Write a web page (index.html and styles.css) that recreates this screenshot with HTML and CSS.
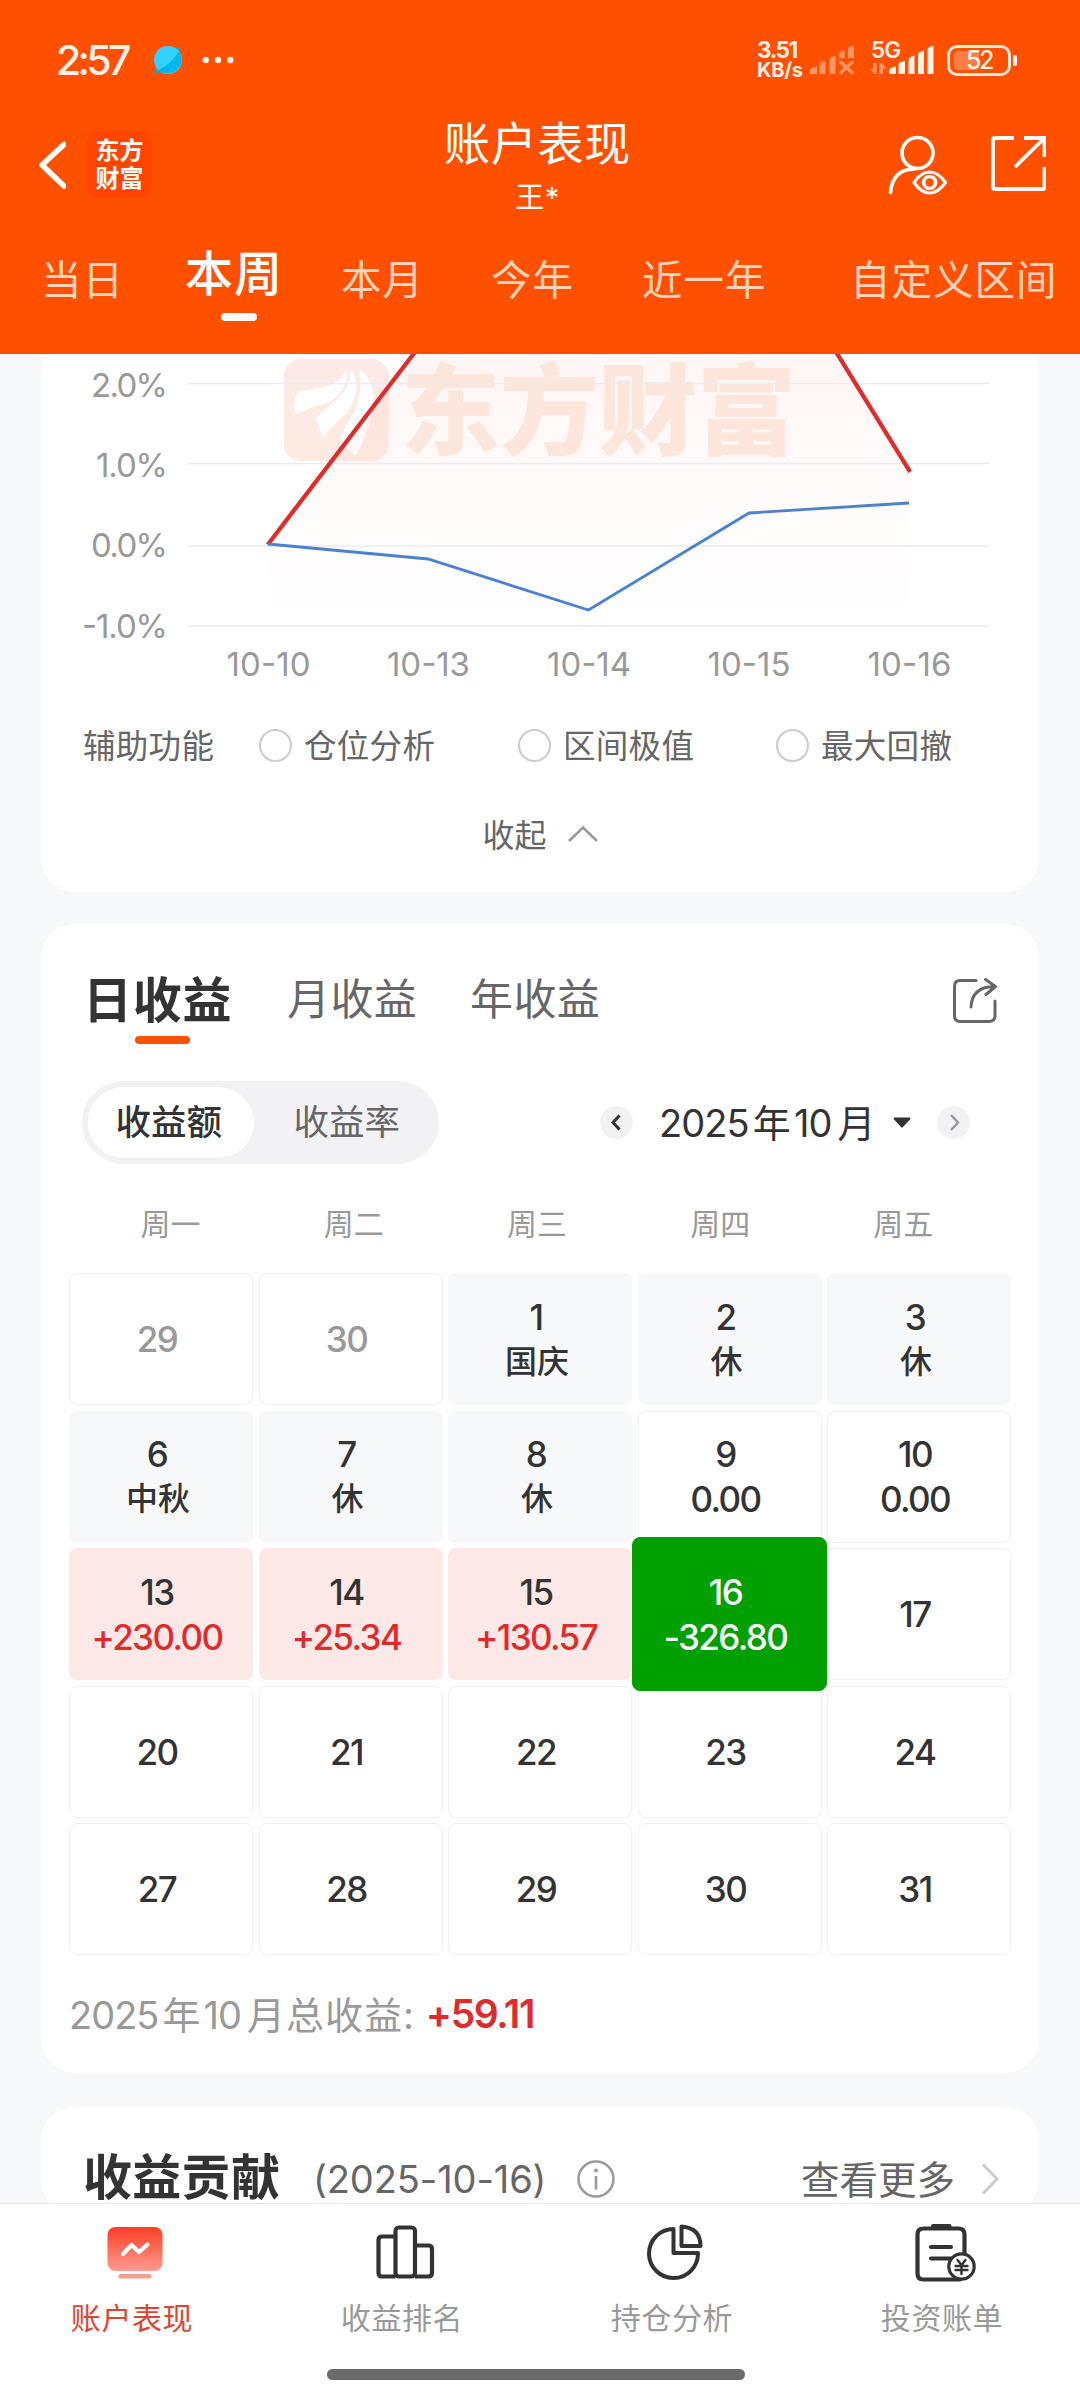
FILE: index.html
```html
<!DOCTYPE html>
<html lang="zh-CN">
<head>
<meta charset="utf-8">
<title>账户表现</title>
<link rel="stylesheet" href="styles.css">
</head>
<body>
<div class="app">
  <header class="header">
    <div class="status">
      <span class="clock">2:57</span>
      <svg class="status-left" width="90" height="34" viewBox="150 43 90 34">
        <path d="M154 74l2-7 5 5zM180 47l-2 7-5-5z" fill="#2a9fc0"/>
        <circle cx="168" cy="60" r="14" fill="#33d1ff"/>
        <path d="M179 51.500A14 14 0 0 1 158.500 70.200Q171 64 179 51.500z" fill="#00b8ee"/>
        <g fill="#fff0e8"><circle cx="205.700" cy="60" r="3.200"/><circle cx="218" cy="60" r="3.200"/><circle cx="230.300" cy="60" r="3.200"/></g>
      </svg>
      <div class="speed"><span class="speed-num">3.51</span><span class="speed-unit">KB/s</span></div>
      <svg class="signal" width="46" height="30" viewBox="810 46 46 30" fill="#ff9664">
        <path d="M810 75v-3q0-2 2-3l5-2v8zM819.500 75v-9q0-2 2-3l4-1v13zM829.500 75v-14q0-2 2-3l4-1v18zM839 59v-3.500q0-2 2-3l3.500-1V59zM848 59v-8.500q0-2 2-3l4-1.500v13z"/>
        <path d="M841 63.500l11 10M852 63.500l-11 10" stroke="#ff9664" stroke-width="3.500" stroke-linecap="round"/>
      </svg>
      <div class="net">
        <span class="net-type">5G</span>
        <svg width="64" height="30" viewBox="870 46 64 30">
          <path d="M870 70h3.500v-6h3v11h-2zM879.500 64h2l5 5.500h-3.500v5.500h-3.500z" fill="#ff9664"/>
          <path fill="#fff0e8" d="M889 75v-3q0-2 2-3l5-2v8zM898.500 75v-9q0-2 2-3l4.500-1v13zM908.500 75v-14q0-2 2-3l4-1.500v18.500zM918 75v-19q0-2 2-3l4-1.500v23.500zM927.500 75v-24q0-2 2-3l4-1.500v28.500z"/>
        </svg>
      </div>
      <div class="battery"><span class="battery-fill"></span><span class="battery-num">52</span></div>
      <span class="battery-tip"></span>
    </div>

    <div class="titlebar">
      <div class="title-left">
        <svg width="28" height="50" viewBox="38 140 28 50"><path d="M64 144.500L42 165l22 21" fill="none" stroke="#fff" stroke-width="5.500" stroke-linecap="round" stroke-linejoin="round"/></svg>
        <div class="brand"><span>东方</span><span>财富</span></div>
      </div>
      <div class="title-mid">
        <h1 class="title">账户表现</h1>
        <div class="subtitle">王*</div>
      </div>
      <div class="title-right">
        <svg width="62" height="62" viewBox="887 134 62 62" fill="none" stroke="#fff" stroke-width="3.700" stroke-linecap="round">
          <circle cx="917.500" cy="152" r="15.500"/>
          <path d="M890.500 191.500q2-23 23.500-23.500"/>
          <path d="M914 181.500Q921 171 929.600 171T945.500 181.500Q938 192 929.600 192T914 181.500z" fill="#ff5000" stroke-linejoin="round" stroke-width="3.200"/>
          <circle cx="929.600" cy="181.500" r="6" stroke-width="3.600"/>
        </svg>
        <svg width="56" height="56" viewBox="990 136 56 56" fill="none" stroke="#fff" stroke-width="3.800">
          <path d="M1014 139H995q-2 0-2 2v47q0 2 2 2h48q1.500 0 1.500-2V168M1024 139h20.500v19M1044 139.500L1015 168"/>
        </svg>
      </div>
    </div>

    <nav class="tabs">
      <span class="tab">当日</span>
      <span class="tab tab-active">本周</span>
      <span class="tab">本月</span>
      <span class="tab">今年</span>
      <span class="tab">近一年</span>
      <span class="tab">自定义区间</span>
    </nav>
  </header>

  <main class="content">
    <section class="card chart-card">
      <svg class="chart" width="998" height="336" viewBox="41 354 998 336">
        <defs>
          <linearGradient id="area" x1="0" y1="210" x2="0" y2="626" gradientUnits="userSpaceOnUse">
            <stop offset="0" stop-color="#f33a2a" stop-opacity=".08"/>
            <stop offset="1" stop-color="#f36a5a" stop-opacity="0"/>
          </linearGradient>
          <linearGradient id="mark" x1="0" y1="0" x2="0" y2="1">
            <stop offset="0" stop-color="#fde9e6"/><stop offset="1" stop-color="#fdebe2"/>
          </linearGradient>
        </defs>
        <rect x="284" y="359" width="105" height="102" rx="17" fill="url(#mark)"/>
        <g fill="#fff">
          <path d="M294 405q1-13 6-14c22-3 40-6 47-22q1 24-20 34-18 5-31 11-2-3-2-9z"/>
          <path d="M316 418c10-12 35-22 35-50q10 18 2 33c-6 17-20 21-29 37q-5-8-8-20z"/>
          <path d="M341 438c5-18 25-30 18-70q19 15 13 43-4 25-17 45-5-7-14-11z"/>
        </g>
        <path d="M268 544L428 335L749 211L909 471V626H268z" fill="url(#area)"/>
        <text class="watermark" x="401" y="447" textLength="395" lengthAdjust="spacing">东方财富</text>
        <path d="M188 383.500H990M188 463.500H990M188 546H990M188 626H990" stroke="#e9ecf0" stroke-width="1.500"/>
        <path d="M269 543L428 335L749 211L909 470" fill="none" stroke="#dc2f2d" stroke-width="4.300" stroke-linecap="square"/>
        <path d="M268 544L428 559L588.500 610L749 513L909 503" fill="none" stroke="#4b80d2" stroke-width="2.800"/>
        <g class="axis" text-anchor="end">
          <text x="168" y="396.500" textLength="77">2.0%</text><text x="168" y="476.500" textLength="72">1.0%</text><text x="168" y="556.500" textLength="77">0.0%</text><text x="168" y="638" textLength="86">-1.0%</text>
        </g>
        <g class="axis" text-anchor="middle">
          <text x="268.500" y="675.500" textLength="84">10-10</text><text x="428.500" y="675.500" textLength="83">10-13</text><text x="589" y="675.500" textLength="84">10-14</text><text x="749" y="675.500" textLength="83">10-15</text><text x="909.500" y="675.500" textLength="84">10-16</text>
        </g>
      </svg>
      <div class="options">
        <span class="options-title label">辅助功能</span>
        <span class="option"><i class="radio"></i><span class="label">仓位分析</span></span>
        <span class="option"><i class="radio"></i><span class="label">区间极值</span></span>
        <span class="option"><i class="radio"></i><span class="label">最大回撤</span></span>
      </div>
      <div class="collapse"><span class="label">收起</span>
        <svg width="32" height="18" viewBox="0 0 32 18"><path d="M2 16L16 2.500 30 16" fill="none" stroke="#999" stroke-width="2.600"/></svg>
      </div>
    </section>

    <section class="card income">
      <div class="income-tabs">
        <span class="itab itab-active">日收益</span>
        <span class="itab">月收益</span>
        <span class="itab">年收益</span>
        <svg class="share" width="46" height="46" viewBox="952 977 46 46" fill="none" stroke="#666" stroke-width="3" stroke-linejoin="round" stroke-linecap="round">
          <path d="M976 979.500H960q-5.500 0-5.500 6v29q0 6 5.500 6h29q6 0 6-6V1000"/>
          <path d="M971 1006q1-20 23-20.500M985.500 978.500l10 7-9.500 8"/>
        </svg>
      </div>
      <div class="controls">
        <div class="toggle"><span class="toggle-on">收益额</span><span class="toggle-off">收益率</span></div>
        <div class="month">
          <svg width="33" height="33"><circle cx="16.500" cy="16.500" r="16.500" fill="#f2f2f4"/><path d="M19.500 9.500l-6.500 7 6.500 7" fill="none" stroke="#333" stroke-width="3"/></svg>
          <span class="month-text">2025<i class="thin"></i>年<i class="thin"></i>10<i class="thin thin-wide"></i>月</span>
          <svg class="caret" width="18" height="11"><path d="M1 .5h16q1 1 0 2L10 10q-1 1-2 0L1 2.500q-1-1 0-2z" fill="#333"/></svg>
          <svg width="33" height="33"><circle cx="16.500" cy="16.500" r="16.500" fill="#f2f2f4"/><path d="M14 9l7 7.500-7 7.500" fill="none" stroke="#999" stroke-width="2.500"/></svg>
        </div>
      </div>
      <div class="weekdays"><span>周一</span><span>周二</span><span>周三</span><span>周四</span><span>周五</span></div>
      <div class="days">
        <div class="day muted"><b>29</b></div>
        <div class="day muted"><b>30</b></div>
        <div class="day rest"><b>1</b><b>国庆</b></div>
        <div class="day rest"><b>2</b><b>休</b></div>
        <div class="day rest"><b>3</b><b>休</b></div>
        <div class="day rest"><b>6</b><b>中秋</b></div>
        <div class="day rest"><b>7</b><b>休</b></div>
        <div class="day rest"><b>8</b><b>休</b></div>
        <div class="day"><b>9</b><b>0.00</b></div>
        <div class="day"><b>10</b><b>0.00</b></div>
        <div class="day gain"><b>13</b><b class="amount">+230.00</b></div>
        <div class="day gain"><b>14</b><b class="amount">+25.34</b></div>
        <div class="day gain"><b>15</b><b class="amount">+130.57</b></div>
        <div class="day selected"><b>16</b><b>-326.80</b></div>
        <div class="day"><b>17</b></div>
        <div class="day"><b>20</b></div>
        <div class="day"><b>21</b></div>
        <div class="day"><b>22</b></div>
        <div class="day"><b>23</b></div>
        <div class="day"><b>24</b></div>
        <div class="day"><b>27</b></div>
        <div class="day"><b>28</b></div>
        <div class="day"><b>29</b></div>
        <div class="day"><b>30</b></div>
        <div class="day"><b>31</b></div>
      </div>
      <div class="total"><span>2025<i class="thin"></i>年<i class="thin"></i>10<i class="thin thin-wide"></i><span class="total-label">月总收益:</span></span><strong>+59.11</strong></div>
    </section>

    <section class="card contrib">
      <h2 class="contrib-title">收益贡献</h2>
      <span class="contrib-date">(2025-10-16)</span>
      <svg width="40" height="40" viewBox="0 0 40 40"><circle cx="20" cy="20" r="17.500" fill="none" stroke="#999" stroke-width="2.500"/><circle cx="20" cy="11.500" r="2" fill="#999"/><path d="M20 17v13.500" stroke="#999" stroke-width="2.600"/></svg>
      <span class="more">查看更多</span>
      <svg width="20" height="34" viewBox="0 0 20 34"><path d="M3 2.500L17 17 3 31.500" fill="none" stroke="#ccc" stroke-width="3"/></svg>
    </section>
  </main>

  <footer class="bottom">
    <nav class="bottom-nav">
      <div class="nav-item nav-active">
        <svg width="60" height="60" viewBox="105 2220 60 60">
          <defs><linearGradient id="screen" x1="0" y1="0" x2="0" y2="1"><stop offset="0" stop-color="#ff3d25"/><stop offset="1" stop-color="#ff9c8e"/></linearGradient></defs>
          <rect x="107.500" y="2227" width="55" height="44" rx="8" fill="url(#screen)"/>
          <rect x="118.500" y="2274" width="33" height="4.500" rx="2" fill="#f79c8e"/>
          <path d="M123 2254l8.500-9 7.500 7 8.500-7.500" fill="none" stroke="#fff" stroke-width="4.200" stroke-linecap="round" stroke-linejoin="round"/>
        </svg><span>账户表现</span>
      </div>
      <div class="nav-item">
        <svg width="60" height="60" viewBox="375 2220 60 60" fill="none" stroke="#333" stroke-width="4.200">
          <rect x="395.500" y="2227.500" width="19.500" height="49" rx="3.500"/>
          <path d="M395.500 2236.500H382q-3.500 0-3.500 3.500v33q0 3.500 3.500 3.500h13.500M415 2245.500h13.500q3.500 0 3.500 3.500v24q0 3.500-3.500 3.500H415"/>
        </svg><span>收益排名</span>
      </div>
      <div class="nav-item">
        <svg width="60" height="60" viewBox="645 2220 60 60" fill="none" stroke="#333" stroke-width="4" stroke-linejoin="round">
          <path d="M673.500 2229A24.500 24.500 0 1 0 698 2253H673.500z"/><path d="M681.500 2226.500V2246H700.500Q700.500 2228 681.500 2226.500z"/>
        </svg><span>持仓分析</span>
      </div>
      <div class="nav-item">
        <svg width="62" height="62" viewBox="914 2220 62 62" fill="none" stroke="#333" stroke-width="4.200" stroke-linecap="round">
          <path d="M964.500 2255V2234.500q0-6-6-6H923.500q-6 0-6 6V2273.500q0 6 6 6H960M931 2247h20M931 2258.500h20"/>
          <path d="M933 2226h16.500" stroke-width="4"/>
          <circle cx="961.500" cy="2266.500" r="12.700" fill="#fff" stroke-width="3.200"/>
          <path d="M957.500 2260l4 5 4-5M955.500 2266h12M955.500 2270h12M961.500 2265v9" stroke-width="2.400"/>
        </svg><span class="nav-last">投资账单</span>
      </div>
    </nav>
    <div class="home-bar"></div>
  </footer>
</div>
</body>
</html>
```
FILE: styles.css
```css
* { box-sizing: border-box; margin: 0; padding: 0; }
body { width: 1080px; height: 2400px; overflow: hidden; background: #f7f8fa; color: #333; font-family: Inter, "Noto Sans CJK SC", sans-serif; font-weight: 400; }
svg { display: block; flex: none; }
i { font-style: normal; }
span, b, h1, h2 { white-space: nowrap; }
.app { height: 2400px; display: flex; flex-direction: column; overflow: hidden; }

.header { height: 354px; flex: none; background: #ff5000; color: #fff; }
.status { height: 104px; padding: 16px 0 0 56px; display: flex; align-items: center; color: #fff0e8; }
.clock { width: 94px; font-size: 41px; font-weight: 500; line-height: 88px; letter-spacing: -3.7px; }
.status-left { margin-right: 517px; }
.speed { width: 53px; display: flex; flex-direction: column; font-weight: 700; line-height: 20px; }
.speed-num { font-size: 22.5px; letter-spacing: -1.4px; }
.speed-unit { font-size: 20px; letter-spacing: -.2px; }
.net { width: 64px; margin: -1px 0 0 14px; position: relative; }
.net-type { position: absolute; left: 1px; top: -6px; font-size: 22.5px; line-height: 22px; font-weight: 600; letter-spacing: -1px; }
.battery { width: 64px; height: 31px; margin-left: 13px; border: 3px solid #ffe7da; border-radius: 10px; position: relative; text-align: center; }
.battery-fill { position: absolute; left: 4px; top: 3px; width: 25px; height: 19px; border-radius: 4px; background: #ff7e43; }
.battery-num { position: relative; font-size: 25px; line-height: 25px; font-weight: 500; letter-spacing: -2.5px; }
.battery-tip { width: 4px; height: 11px; margin-left: 2px; border-radius: 2px; background: #fff0e8; }

.titlebar { height: 126px; display: flex; justify-content: space-between; padding: 0 34px 0 38px; }
.title-left, .title-right { width: 190px; display: flex; align-items: flex-start; }
.title-left { padding-top: 27px; gap: 21px; }
.title-left svg { margin-top: 9px; }
.brand { width: 65px; height: 67px; border-radius: 13px; background: #ff4500; display: flex; flex-direction: column; align-items: center; padding-top: 6px; font-size: 24px; line-height: 28px; font-weight: 700; }
.title-mid { text-align: center; padding-right: 9px; }
.title { margin-top: 10px; font-size: 46px; line-height: 58px; font-weight: 400; letter-spacing: .8px; }
.subtitle { margin-top: 9px; font-size: 29px; line-height: 34px; letter-spacing: .5px; }
.title-right { width: 190px; padding-top: 31px; gap: 41px; justify-content: flex-end; }

.tabs { height: 124px; padding-left: 41px; display: grid; grid-template-columns: 144px 156px 150px 151px 208px auto; font-size: 40.5px; letter-spacing: 1px; line-height: 101px; color: #ffd2bb; }
.tab-active { font-size: 48px; line-height: 87px; font-weight: 500; color: #fff; }
.tab-active::after { content: ""; display: block; width: 36px; height: 8px; margin: -4px 0 0 36px; border-radius: 4px; background: #fff; }

.content { flex: 1; min-height: 0; overflow: hidden; padding: 0 41px; display: flex; flex-direction: column; }
.card { flex: none; background: #fff; border-radius: 34px; }
.chart-card { height: 538px; border-radius: 0 0 34px 34px; margin-bottom: 32px; }
.watermark { font-family: "Noto Sans CJK SC", sans-serif; font-size: 99px; font-weight: 900; fill: #fce6dc; }
.axis { font-size: 33px; fill: #999; }
.options { height: 110px; padding-left: 42px; display: grid; grid-template-columns: 176px 259px 258px auto; align-items: center; font-size: 32.5px; letter-spacing: .3px; color: #666; }
.option { display: flex; align-items: center; gap: 12px; }
.label { padding-bottom: 4px; }
.radio { width: 33px; height: 33px; border: 2.5px solid #ccc; border-radius: 50%; }
.collapse { height: 70px; padding-left: 1px; display: flex; justify-content: center; align-items: center; gap: 20px; font-size: 32px; color: #666; }
.collapse svg { margin-top: -3px; }

.income { height: 1149px; margin-bottom: 34px; padding: 0 28px; }
.income-tabs { height: 157px; padding: 0 13px 0 14px; display: flex; line-height: 151px; color: #666; font-size: 43px; letter-spacing: .4px; }
.itab { width: 183px; }
.itab-active { width: 204px; font-size: 49px; line-height: 153px; letter-spacing: .8px; font-weight: 600; color: #333; }
.itab-active::after { content: ""; display: block; width: 55px; height: 8px; margin: -41px 0 0 52px; border-radius: 4px; background: #ff5000; }
.share { margin: 54px 0 0 auto; }
.controls { height: 83px; padding-left: 13px; display: flex; align-items: center; }
.toggle { width: 357px; height: 83px; padding: 6px; border-radius: 42px; background: #f2f2f4; display: flex; font-size: 35.5px; line-height: 72px; text-align: center; }
.toggle-on { width: 168px; height: 71px; padding-right: 4px; border-radius: 36px; background: #fff; font-weight: 500; }
.toggle-off { width: 182px; padding-left: 7px; color: #666; }
.month { display: flex; align-items: center; margin-left: 161px; }
.month-text { width: 260px; padding: 0 0 5px 26px; font-size: 38px; letter-spacing: -.9px; }
.thin { display: inline-block; width: 4px; }
.thin-wide { width: 6px; }
.caret { margin-right: 26px; }
.weekdays { height: 109px; padding: 9px 16px 0 10px; display: grid; grid-template-columns: repeat(5, 183.2px); text-align: center; line-height: 102px; font-size: 30px; color: #999; }
.days { display: grid; grid-template-columns: repeat(5, 1fr); grid-auto-rows: 132px; gap: 5.5px; }
.day { padding: 1px 8px 0 0; border: 1.5px solid #f0f0f1; border-radius: 8px; display: flex; flex-direction: column; justify-content: center; align-items: center; font-size: 35px; letter-spacing: -1.6px; line-height: 45px; }
.day b { font-weight: 500; }
.muted { color: #999; }
.rest { background: #f7f8fa; border-color: #f7f8fa; }
.rest b:last-child { font-size: 32px; line-height: 44px; letter-spacing: 0; margin: 0 -2px 1px 0; }
.gain { background: #fde8e8; border-color: #fde8e8; }
.amount { color: #dc2c2c; }
.selected { margin: -11px -5.5px; background: #00a000; border-color: #00a000; color: #fff; z-index: 1; }
.total { height: 114px; display: flex; align-items: center; font-size: 38px; color: #999; letter-spacing: -1px; }
.total-label { letter-spacing: 1px; }
.total strong { margin: 2px 0 0 11px; font-size: 39px; font-weight: 600; color: #dc2c2c; letter-spacing: -1.4px; }

.contrib { height: 107px; padding: 36px 39px 0 42px; display: flex; align-items: center; }
.contrib-title { width: 230px; font-size: 49px; line-height: 60px; font-weight: 600; padding-bottom: 1px; letter-spacing: .3px; }
.contrib-date { width: 263px; font-size: 38px; letter-spacing: -.1px; color: #666; }
.more { margin-left: auto; margin-right: 25px; padding-bottom: 4px; font-size: 38.5px; color: #666; }

.bottom { height: 197px; flex: none; border-top: 1px solid #e8e8ea; background: #fff; }
.bottom-nav { display: grid; grid-template-columns: repeat(4, 270px); color: #999; font-size: 30px; }
.nav-item { height: 165px; padding-top: 16px; display: flex; flex-direction: column; align-items: center; }
.nav-item span { line-height: 40px; margin: 18px 6px 0 0; letter-spacing: .6px; }
.nav-item .nav-last { margin-top: 16px; }
.nav-active { color: #dc4630; }
.home-bar { width: 418px; height: 11px; margin-left: 327px; border-radius: 6px; background: #6a6a6a; }
```
